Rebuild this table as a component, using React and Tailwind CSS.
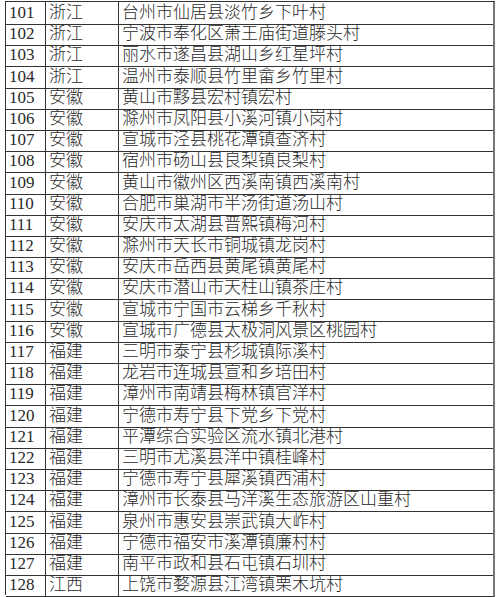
import React from 'react';

const rows = [
  ['101', '浙江', '台州市仙居县淡竹乡下叶村'],
  ['102', '浙江', '宁波市奉化区萧王庙街道滕头村'],
  ['103', '浙江', '丽水市遂昌县湖山乡红星坪村'],
  ['104', '浙江', '温州市泰顺县竹里畲乡竹里村'],
  ['105', '安徽', '黄山市黟县宏村镇宏村'],
  ['106', '安徽', '滁州市凤阳县小溪河镇小岗村'],
  ['107', '安徽', '宣城市泾县桃花潭镇查济村'],
  ['108', '安徽', '宿州市砀山县良梨镇良梨村'],
  ['109', '安徽', '黄山市徽州区西溪南镇西溪南村'],
  ['110', '安徽', '合肥市巢湖市半汤街道汤山村'],
  ['111', '安徽', '安庆市太湖县晋熙镇梅河村'],
  ['112', '安徽', '滁州市天长市铜城镇龙岗村'],
  ['113', '安徽', '安庆市岳西县黄尾镇黄尾村'],
  ['114', '安徽', '安庆市潜山市天柱山镇茶庄村'],
  ['115', '安徽', '宣城市宁国市云梯乡千秋村'],
  ['116', '安徽', '宣城市广德县太极洞风景区桃园村'],
  ['117', '福建', '三明市泰宁县杉城镇际溪村'],
  ['118', '福建', '龙岩市连城县宣和乡培田村'],
  ['119', '福建', '漳州市南靖县梅林镇官洋村'],
  ['120', '福建', '宁德市寿宁县下党乡下党村'],
  ['121', '福建', '平潭综合实验区流水镇北港村'],
  ['122', '福建', '三明市尤溪县洋中镇桂峰村'],
  ['123', '福建', '宁德市寿宁县犀溪镇西浦村'],
  ['124', '福建', '漳州市长泰县马洋溪生态旅游区山重村'],
  ['125', '福建', '泉州市惠安县崇武镇大岞村'],
  ['126', '福建', '宁德市福安市溪潭镇廉村村'],
  ['127', '福建', '南平市政和县石屯镇石圳村'],
  ['128', '江西', '上饶市婺源县江湾镇栗木坑村'],
];

const cjk = "font-['Liberation_Serif','Noto_Sans_CJK_SC',serif]";

export default function App() {
  return (
    <div className="w-[500px] h-[597px] bg-white pl-[5px] pt-px overflow-hidden">
      {/* table */}
      <div className="w-[490px] border-t border-l border-[#333] text-[#2a2a2a]">
        {rows.map(([no, prov, place]) => (
          <div key={no} className="grid grid-cols-[40px_73px_1fr] h-[21.2px]">
            <div className={`border-r border-b border-[#333] pl-[3px] text-[17px] leading-[22px] ${cjk}`}>
              {no}
            </div>
            <div className={`border-r border-b border-[#333] pl-[3px] text-[17px] leading-[22px] font-light ${cjk}`}>
              {prov}
            </div>
            <div className={`border-r-2 border-b border-r-[#777] border-b-[#333] pl-[3px] text-[17px] leading-[22px] font-light whitespace-nowrap ${cjk}`}>
              {place}
            </div>
          </div>
        ))}
      </div>
    </div>
  );
}
